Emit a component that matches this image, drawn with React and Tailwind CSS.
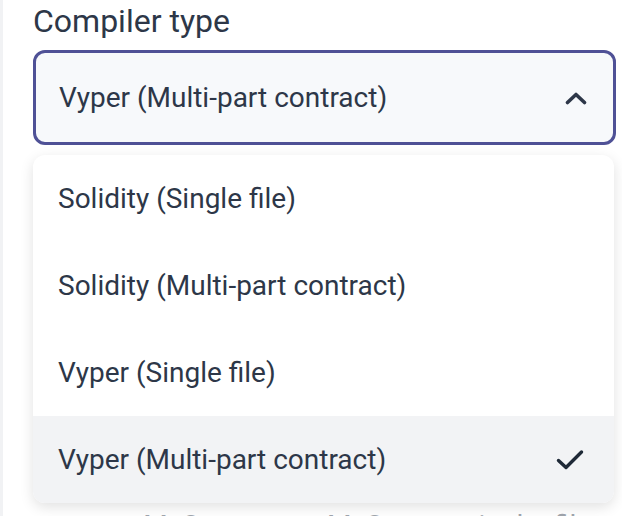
import React from 'react';

const options = [
  'Solidity (Single file)',
  'Solidity (Multi-part contract)',
  'Vyper (Single file)',
  'Vyper (Multi-part contract)',
];

export default function App() {
  const selected = options[3];
  return (
    <div className="relative h-[516px] w-[622px] overflow-hidden border-l-[3px] border-[#f1f2f4] bg-white font-['Roboto',sans-serif] text-[#2d3748]">
      <div className="pl-[30px] pr-[6px]">
        <label className="block text-[32px] leading-[42px]">Compiler type</label>
        <button className="mt-[8px] flex h-[95px] w-[583px] items-center justify-between rounded-[12px] border-[3px] border-[#4f5196] bg-[#f7f9fb] pl-[23px] pr-[26px] text-left text-[28px]">
          <span>{selected}</span>
          <svg width="22" height="14" viewBox="0 0 22 14" fill="none">
            <path d="M2.5 11.5 11 3.5l8.5 8" stroke="#2d3748" strokeWidth="3.6" strokeLinecap="round" strokeLinejoin="round" />
          </svg>
        </button>
        <p className="mt-[363px] whitespace-nowrap text-[28px] leading-[36px] text-[#a0a5ad]">
          contract MyContract or MyContract in the file
        </p>
      </div>

      <ul className="absolute left-[30px] top-[155px] w-[581px] overflow-hidden rounded-[12px] bg-white shadow-[0_4px_14px_rgba(0,0,0,0.12)]">
        {options.map((o) => (
          <li
            key={o}
            className={`flex h-[87px] items-center justify-between pl-[25px] pr-[30px] text-[28px] ${o === selected ? 'bg-[#f2f3f5]' : ''}`}
          >
            <span>{o}</span>
            {o === selected && (
              <svg width="28" height="22" viewBox="0 0 28 22" fill="none">
                <path d="M2.5 11.5 10 18.5 25.5 3" stroke="#1f2937" strokeWidth="3.4" strokeLinecap="round" strokeLinejoin="round" />
              </svg>
            )}
          </li>
        ))}
      </ul>
    </div>
  );
}
